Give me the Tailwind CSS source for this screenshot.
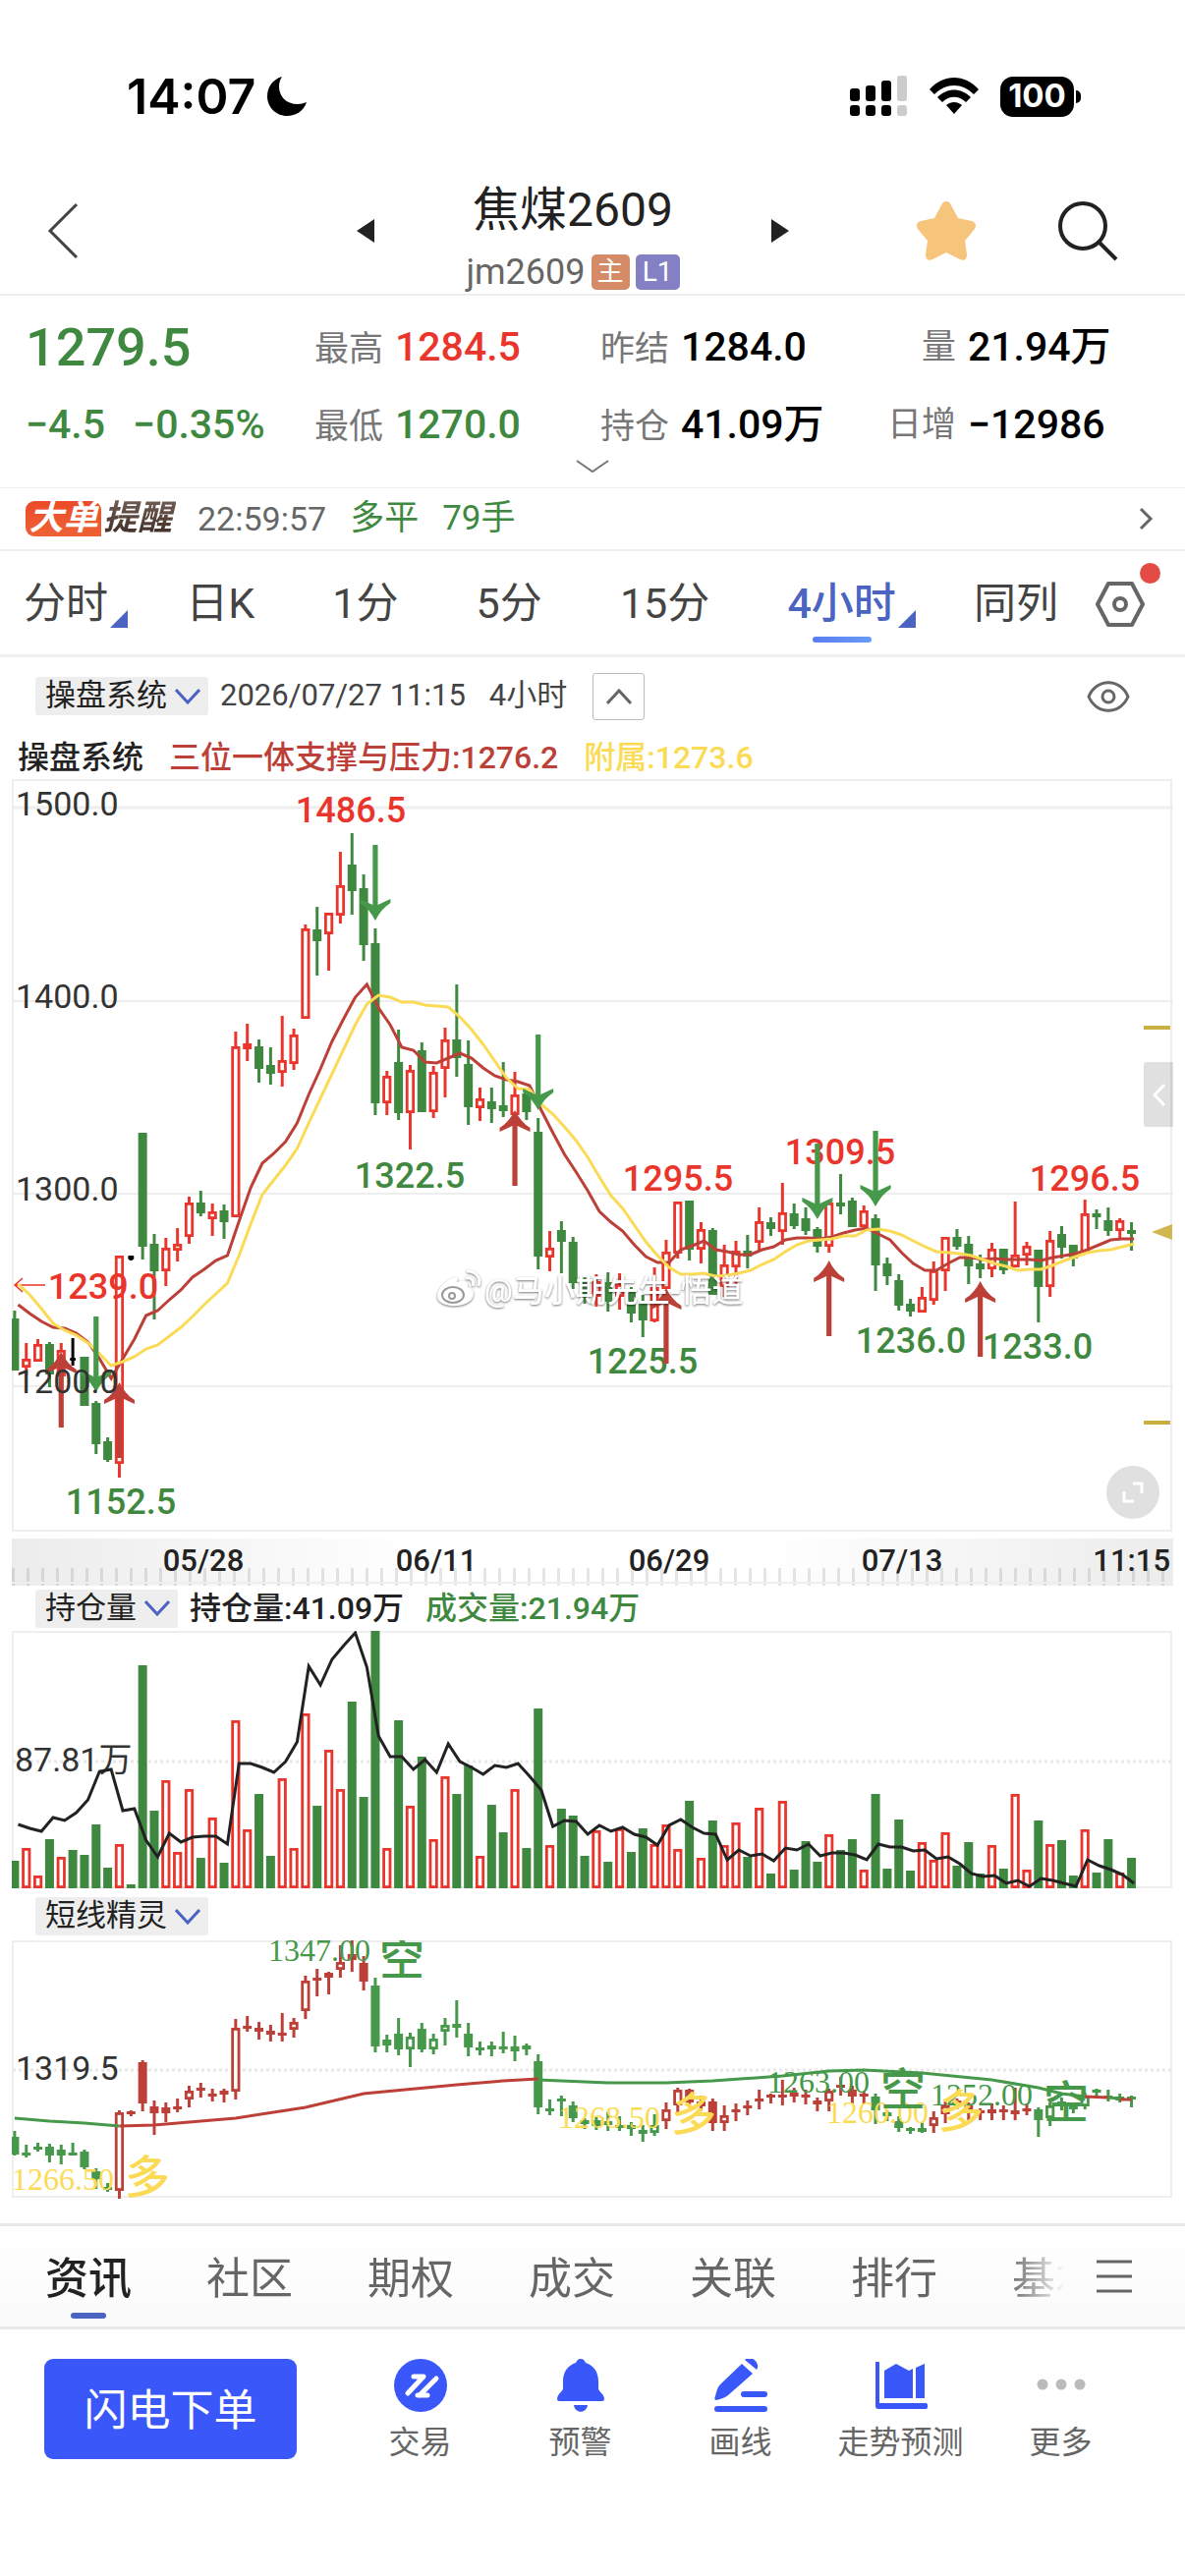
<!DOCTYPE html>
<html lang="zh-CN">
<head>
  <meta charset="UTF-8" />
  <meta name="viewport" content="width=device-width, initial-scale=1.0" />
  <title>焦煤2609</title>
  <script src="https://cdn.jsdelivr.net/npm/@tailwindcss/browser@4"></script>
</head>
<body class="bg-white font-[Roboto,'Noto_Sans_CJK_SC',sans-serif] text-[#222]">
  <div class="flex min-h-screen flex-col">

    <!-- Status bar -->
    <div class="flex h-[196px] shrink-0 items-center justify-between pl-[129px] pr-[106px]">
      <div class="flex items-center gap-3 font-[Inter,sans-serif] text-[50px] font-semibold text-black">
        <span>14:07</span>
        <svg class="h-[42px] w-[42px]" viewBox="0 0 42 42"><path d="M15 1C5 4 0 12 0 21c0 11 9 20 20 20 9 0 17-5 20-14-3 1-6 2-9 2C19 29 12 21 12 11c0-4 1-7 3-10z" /></svg>
      </div>
      <div class="flex items-center gap-[22px]">
        <svg class="h-[42px] w-[60px]" viewBox="0 0 60 42">
          <rect x="1" y="13" width="10" height="13" rx="3" /><rect x="17" y="10" width="10" height="16" rx="3" /><rect x="33" y="5" width="10" height="21" rx="3" /><rect x="49" y="0" width="10" height="26" rx="3" fill="#ccc" />
          <rect x="1" y="30" width="10" height="11" rx="3" /><rect x="17" y="30" width="10" height="11" rx="3" /><rect x="33" y="30" width="10" height="11" rx="3" /><rect x="49" y="30" width="10" height="11" rx="3" fill="#ccc" />
        </svg>
        <svg class="h-[38px] w-[50px]" viewBox="0 0 50 38">
          <path d="M0 12C14-4 36-4 50 12l-5 5C33 5 17 5 5 17z" /><path d="M8 20c10-10 24-10 34 0l-5 5c-7-7-17-7-24 0z" /><path d="M17 28c5-4 11-4 16 0l-8 9z" />
        </svg>
        <div class="flex items-center gap-[2px]">
          <span class="flex h-[41px] w-[75px] items-center justify-center rounded-[13px] bg-black font-[Inter,sans-serif] text-[33px] font-bold text-white">100</span>
          <span class="h-[13px] w-[5px] rounded-r-full bg-black"></span>
        </div>
      </div>
    </div>

    <!-- Title bar -->
    <header class="flex h-[105px] shrink-0 items-start justify-between border-b-2 border-[#eee] pl-[48px] pr-[68px]">
      <button aria-label="返回" class="mt-[10px]"><svg class="h-[58px] w-[32px]" viewBox="0 0 32 58" fill="none" stroke="#444" stroke-width="3"><path d="M30 2 3 29l27 27" /></svg></button>
      <div class="ml-[154px] flex items-start">
        <button aria-label="上一个" class="mt-[27px]"><svg class="h-[24px] w-[18px]" viewBox="0 0 18 24"><path d="M18 0v24L0 12z" fill="#222" /></svg></button>
        <div class="-mt-[16px] w-[404px] text-center">
          <h1 class="text-[48px] leading-[68px]">焦煤2609</h1>
          <div class="flex items-center justify-center gap-[6px] text-[#666]">
            <span class="text-[36px] leading-[58px]">jm2609</span>
            <span class="flex h-[36px] w-[39px] items-center justify-center rounded-[5px] bg-[#d48b66] text-[27px] text-white">主</span>
            <span class="flex h-[36px] w-[45px] items-center justify-center rounded-[5px] bg-[#8381c3] text-[28px] text-white">L1</span>
          </div>
        </div>
        <button aria-label="下一个" class="mt-[27px]"><svg class="h-[24px] w-[18px]" viewBox="0 0 18 24"><path d="M0 0v24l18-12z" fill="#222" /></svg></button>
      </div>
      <div class="mt-[8px] flex gap-[82px]">
        <button aria-label="自选"><svg class="h-[62px] w-[62px]" viewBox="0 0 62 62"><path d="M31 1c3 0 4 2 5 4l7 13 14 3c4 1 5 5 3 8L50 41l2 14c0 5-3 7-7 5l-14-7-14 7c-4 2-7 0-7-5l2-14L2 29c-2-3-1-7 3-8l14-3 7-13c1-2 2-4 5-4z" fill="#f6c47a" /></svg></button>
        <button aria-label="搜索"><svg class="h-[62px] w-[62px]" viewBox="0 0 62 62" fill="none" stroke="#222" stroke-width="4"><circle cx="26" cy="26" r="23" /><path d="m42 42 18 18" /></svg></button>
      </div>
    </header>

    <!-- Quote -->
    <section class="relative grid h-[195px] shrink-0 grid-cols-[294px_291px_1fr_auto] content-start pl-[26px] pr-[76px] pt-[14px] text-[41px] leading-[77px] font-medium whitespace-nowrap text-black">
      <div class="text-[54px] text-[#3f8840]">1279.5</div>
      <div><span class="mr-3 text-[35px] font-normal text-[#777]">最高</span><span class="text-[#ea352c]">1284.5</span></div>
      <div><span class="mr-3 text-[35px] font-normal text-[#777]">昨结</span>1284.0</div>
      <div class="grid grid-cols-[auto_145px] justify-end gap-3"><span class="text-[35px] font-normal text-[#777]">量</span><span>21.94万</span></div>
      <div class="flex gap-[28px] text-[#3f8840]"><span>−4.5</span><span>−0.35%</span></div>
      <div><span class="mr-3 text-[35px] font-normal text-[#777]">最低</span><span class="text-[#3f8840]">1270.0</span></div>
      <div><span class="mr-3 text-[35px] font-normal text-[#777]">持仓</span>41.09万</div>
      <div class="grid grid-cols-[auto_145px] justify-end gap-3"><span class="text-[35px] font-normal text-[#777]">日增</span><span>−12986</span></div>
      <button aria-label="展开行情" class="absolute bottom-[14px] left-1/2 -translate-x-1/2"><svg class="h-[14px] w-[34px]" viewBox="0 0 34 14" fill="none" stroke="#777" stroke-width="2"><path d="m1 1 16 11L33 1" /></svg></button>
    </section>

    <!-- Big order notice -->
    <a href="#" class="flex h-[65px] shrink-0 items-center border-b-2 border-t border-[#eee] pl-[26px] pr-[32px] text-[34px]">
      <span class="flex h-[36px] w-[77px] items-center justify-center rounded-l-[9px] rounded-tr-[9px] bg-linear-to-b from-[#ec4a28] to-[#ee6234] text-[35px] font-bold text-white italic">大单</span>
      <span class="ml-[2px] bg-linear-to-b from-[#7a665c] to-[#35241c] bg-clip-text pr-1 text-[35px] font-bold text-transparent italic">提醒</span>
      <span class="ml-[22px] text-[#666]">22:59:57</span>
      <span class="ml-[24px] text-[35px] text-[#3f8840]">多平</span>
      <span class="ml-[24px] text-[35px] text-[#3f8840]">79手</span>
      <svg class="ml-auto h-[24px] w-[15px]" viewBox="0 0 15 24" fill="none" stroke="#666" stroke-width="3"><path d="m2 2 10 10L2 22" /></svg>
    </a>

    <!-- Period tabs -->
    <nav class="flex h-[108px] shrink-0 items-center border-b-[3px] border-[#eee] pt-[2px] pl-[24px] pr-[41px] text-[43px] text-[#444]">
      <div class="flex flex-1 items-center justify-between">
        <button class="relative">分时<svg class="absolute bottom-[8px] left-full ml-[2px] h-[18px] w-[18px]" viewBox="0 0 18 18"><path d="M18 0v18H0z" fill="#4b63c1" /></svg></button>
        <button>日K</button>
        <button>1分</button>
        <button>5分</button>
        <button>15分</button>
        <button class="relative font-medium text-[#4b63c1]">4小时<svg class="absolute bottom-[8px] left-full ml-[2px] h-[18px] w-[18px]" viewBox="0 0 18 18"><path d="M18 0v18H0z" fill="#4b63c1" /></svg>
          <span class="absolute -bottom-[7px] left-1/2 h-[6px] w-[60px] -translate-x-1/2 rounded-full bg-linear-to-r from-[#5b7cf0] to-[#669bf8]"></span></button>
        <button>同列</button>
      </div>
      <button aria-label="设置" class="relative ml-[38px]">
        <svg class="h-[48px] w-[50px]" viewBox="0 0 50 48" fill="none" stroke="#666" stroke-width="4"><path d="M13 3h24l11 21-11 21H13L2 24z" stroke-linejoin="round" /><circle cx="25" cy="24" r="6" /></svg>
        <span class="absolute -top-[18px] -right-[16px] h-[21px] w-[21px] rounded-full bg-[#e54b45]"></span>
      </button>
    </nav>

    <!-- Main chart header -->
    <div class="flex h-[79px] shrink-0 items-center pl-[36px] pr-[56px] text-[31px] text-[#444]">
      <label class="relative flex items-center rounded-[3px] bg-[#eee]">
        <select aria-label="主图指标" class="h-[39px] appearance-none bg-transparent pr-[42px] pb-[2px] pl-[10px] text-[31px] leading-[37px] text-[#222]"><option>操盘系统</option></select>
        <svg class="pointer-events-none absolute right-[8px] h-[16px] w-[26px]" viewBox="0 0 26 16" fill="none" stroke="#4b63c1" stroke-width="3"><path d="m1 1 12 13L25 1" /></svg>
      </label>
      <span class="ml-[12px]">2026/07/27 11:15</span>
      <span class="ml-[24px]">4小时</span>
      <button aria-label="收起" class="ml-[26px] flex h-[48px] w-[53px] items-center justify-center rounded-[3px] border border-[#bbb]"><svg class="h-[16px] w-[26px]" viewBox="0 0 26 16" fill="none" stroke="#666" stroke-width="3"><path d="M1 15 13 2l12 13" /></svg></button>
      <button aria-label="显示" class="ml-auto"><svg class="h-[32px] w-[44px]" viewBox="0 0 44 32" fill="none" stroke="#666" stroke-width="3"><path d="M2 16C10-3 34-3 42 16 34 35 10 35 2 16z" /><circle cx="22" cy="16" r="6" /></svg></button>
    </div>
    <div class="flex h-[45px] shrink-0 items-center gap-[26px] pl-[18px] text-[32px] font-medium">
      <span>操盘系统</span><span class="text-[#bd4038]">三位一体支撑与压力:1276.2</span><span class="text-[#fbdb55]">附属:1273.6</span>
    </div>

    <!-- Main chart -->
    <div class="relative px-[12px]">
      <svg class="block w-full" viewBox="12 793 1182 773">
        <g fill="none" stroke="#eee" stroke-width="2">
          <rect x="13" y="794" width="1179" height="764" />
          <path d="M12 822h1182" stroke-width="3" /><path d="M12 1019h1182M12 1215h1182M12 1411h1182" />
        </g>
        <g id="candles"></g>
        <g class="text-[36px] font-medium" text-anchor="middle" fill="#ea352c">
          <text x="357" y="837">1486.5</text><text x="690" y="1212">1295.5</text><text x="855" y="1185">1309.5</text><text x="1104" y="1212">1296.5</text><text x="105" y="1322">1239.0</text>
        </g>
        <g class="text-[36px] font-medium" text-anchor="middle" fill="#3f8840">
          <text x="417" y="1209">1322.5</text><text x="123" y="1541">1152.5</text><text x="654" y="1398">1225.5</text><text x="927" y="1377">1236.0</text><text x="1056" y="1383">1233.0</text>
        </g>
        <path d="M46 1308H15m8-7-8 7 8 7" fill="none" stroke="#ea352c" stroke-width="1.5" />
        <g id="lines"></g>
        <g id="arrows"></g>
        <g class="text-[34px]" fill="#333">
          <text x="16" y="830">1500.0</text><text x="16" y="1026">1400.0</text><text x="16" y="1222">1300.0</text><text x="16" y="1418">1200.0</text>
        </g>
        <g fill="#c9b042"><rect x="1164" y="1044" width="27" height="4" /><rect x="1164" y="1446" width="27" height="4" /><path d="m1172 1254 21-8v16z" fill="#d0b750" /></g>
        <!-- watermark -->
        <g class="drop-shadow-[0_1px_1px_#0008]">
          <path d="M462 1300c-9 3-17 12-17 19 0 14 36 14 37-2 0-4-3-6-6-7 2-5-4-8-11-5 2-5 0-6-3-5z" fill="#fff" />
          <ellipse cx="461" cy="1318" rx="11" ry="8" fill="none" stroke="#999" stroke-width="2" /><circle cx="460" cy="1319" r="3" fill="none" stroke="#999" stroke-width="2" />
          <path d="M474 1301c6-1 9 3 7 8M475 1294c9-1 15 7 12 15" fill="none" stroke="#fff" stroke-width="3" />
          <text x="493" y="1325" class="text-[32px] font-medium" fill="#fff">@马小期先生-悟道</text>
        </g>
      </svg>
      <button aria-label="打开侧栏" class="absolute top-[288px] right-[12px] flex h-[66px] w-[30px] items-center justify-center rounded-l-[3px] bg-black/12"><svg class="h-[23px] w-[13px]" viewBox="0 0 13 23" fill="none" stroke="#fff" stroke-width="3"><path d="M12 1 2 11.500l10 10.500" /></svg></button>
      <button aria-label="全屏" class="absolute right-[26px] bottom-[20px] flex h-[54px] w-[54px] items-center justify-center rounded-full bg-[#e0e0e0]"><svg class="h-[24px] w-[24px]" viewBox="0 0 24 24" fill="none" stroke="#fff" stroke-width="3"><path d="M12 3h9v10M3 11v10h10" /></svg></button>
    </div>

    <!-- Time axis -->
    <div class="px-[12px]">
      <svg class="block w-full" viewBox="12 1566 1182 48">
        <defs>
          <linearGradient id="axisBg"><stop offset="0" stop-color="#ececec" /><stop offset=".35" stop-color="#fff" /><stop offset=".65" stop-color="#fff" /><stop offset="1" stop-color="#ececec" /></linearGradient>
          <pattern id="ticks" x="12" y="1596" width="15" height="18" patternUnits="userSpaceOnUse"><rect width="3" height="18" fill="#000" fill-opacity=".1" /></pattern>
        </defs>
        <rect x="12" y="1566" width="1182" height="48" fill="url(#axisBg)" />
        <rect x="12" y="1596" width="1182" height="18" fill="url(#ticks)" />
        <path d="M12 1611h1182" stroke="#eee" stroke-width="2" />
        <g class="text-[31px] font-medium" fill="#222" text-anchor="middle">
          <text x="207" y="1599">05/28</text><text x="444" y="1599">06/11</text><text x="681" y="1599">06/29</text><text x="918" y="1599">07/13</text><text x="1191" y="1599" text-anchor="end">11:15</text>
        </g>
      </svg>
    </div>

    <!-- Open interest / volume -->
    <div class="flex h-[46px] shrink-0 items-center pl-[36px] text-[32px] font-medium">
      <label class="relative flex items-center rounded-[3px] bg-[#eee]">
        <select aria-label="副图指标一" class="h-[39px] appearance-none bg-transparent pr-[42px] pb-[2px] pl-[10px] text-[31px] leading-[37px] font-normal text-[#222]"><option>持仓量</option></select>
        <svg class="pointer-events-none absolute right-[8px] h-[16px] w-[26px]" viewBox="0 0 26 16" fill="none" stroke="#4b63c1" stroke-width="3"><path d="m1 1 12 13L25 1" /></svg>
      </label>
      <span class="ml-[12px]">持仓量:41.09万</span><span class="ml-[22px] text-[#3f8840]">成交量:21.94万</span>
    </div>
    <div class="px-[12px]">
      <svg class="block w-full" viewBox="12 1660 1182 264">
        <rect x="13" y="1661" width="1179" height="260" fill="none" stroke="#eee" stroke-width="2" />
        <path d="M13 1793h1179" stroke="#e8e8e8" stroke-width="3" stroke-dasharray="3" />
        <text x="15" y="1803" class="text-[34px]" fill="#333">87.81万</text>
        <g id="volume"></g>
      </svg>
    </div>

    <!-- Short-term signals -->
    <div class="flex h-[51px] shrink-0 items-center pt-[2px] pl-[36px]">
      <label class="relative flex items-center rounded-[3px] bg-[#eee]">
        <select aria-label="副图指标二" class="h-[39px] appearance-none bg-transparent pr-[42px] pb-[2px] pl-[10px] text-[31px] leading-[37px] text-[#222]"><option>短线精灵</option></select>
        <svg class="pointer-events-none absolute right-[8px] h-[16px] w-[26px]" viewBox="0 0 26 16" fill="none" stroke="#4b63c1" stroke-width="3"><path d="m1 1 12 13L25 1" /></svg>
      </label>
    </div>
    <div class="px-[12px]">
      <svg class="block w-full" viewBox="12 1975 1182 288">
        <rect x="13" y="1976" width="1179" height="260" fill="none" stroke="#eee" stroke-width="2" />
        <path d="M13 2107h1179" stroke="#e8e8e8" stroke-width="3" stroke-dasharray="3" />
        <text x="16" y="2117" class="text-[34px]" fill="#333">1319.5</text>
        <g id="signals"></g>
        <g class="font-['Liberation_Serif',serif] text-[32px]">
          <g fill="#46984a"><text x="273" y="1996">1347.00</text><text x="781" y="2130">1263.00</text><text x="947" y="2143">1252.00</text></g>
          <g fill="#fbdb55"><text x="12" y="2229">1266.50</text><text x="568" y="2166">1268.50</text><text x="841" y="2161">1260.00</text></g>
        </g>
        <g class="text-[46px] font-medium">
          <g fill="#46984a"><text x="386" y="2010">空</text><text x="896" y="2143">空</text><text x="1062" y="2156">空</text></g>
          <g fill="#fbdb55"><text x="127" y="2232">多</text><text x="683" y="2168">多</text><text x="955" y="2165">多</text></g>
        </g>
      </svg>
    </div>

    <!-- Info tabs -->
    <nav class="flex h-[108px] shrink-0 items-center justify-between border-t-[3px] border-b-[3px] border-[#e9e9e9] bg-linear-to-b from-white to-[#fafafa] pr-[54px] pl-[46px] text-[44px] text-[#666]">
      <div class="flex w-[1040px] gap-[76px] overflow-hidden mask-r-from-[980px] mask-r-to-[1038px] pt-[5px] leading-[84px] whitespace-nowrap">
        <button class="relative font-medium text-[#222]">资讯<span class="absolute bottom-[2px] left-1/2 h-[6px] w-[36px] -translate-x-1/2 rounded-full bg-[#4b63c1]"></span></button>
        <button>社区</button>
        <button>期权</button>
        <button>成交</button>
        <button>关联</button>
        <button>排行</button>
        <button>基本</button>
      </div>
      <button aria-label="全部栏目"><svg class="h-[34px] w-[36px]" viewBox="0 0 36 34" stroke="#666" stroke-width="3"><path d="M0 2h36M0 17h36M0 32h36" /></svg></button>
    </nav>

    <!-- Bottom bar -->
    <footer class="flex items-start pt-[30px] pr-[45px] pl-[45px] text-[32px] text-[#666]">
      <button class="h-[102px] w-[257px] rounded-[9px] bg-[#3a57fa] pt-[3px] text-[44px] text-white">闪电下单</button>
      <div class="ml-[44px] grid flex-1 grid-cols-5 text-center leading-[46px] whitespace-nowrap">
        <button class="flex flex-col items-center gap-[8px]">
          <svg class="h-[54px] w-[54px]" viewBox="0 0 54 54"><circle cx="27" cy="27" r="27" fill="#3a57fa" /><path d="M20 18h10L14 35M24 37h10M43 20 26 37" fill="none" stroke="#fff" stroke-width="5" stroke-linecap="round" stroke-linejoin="round" /></svg>交易
        </button>
        <button class="flex flex-col items-center gap-[8px]">
          <svg class="h-[54px] w-[54px]" viewBox="0 0 54 54" fill="#3a57fa"><path d="M27 0c3 0 4 2 5 4 9 3 13 10 13 19v7c0 3 6 6 6 11 0 1-1 2-2 2H5c-1 0-2-1-2-2 0-5 6-8 6-11v-7C9 14 13 7 22 4c1-2 2-4 5-4zM20 47h14c-1 9-13 9-14 0z" /></svg>预警
        </button>
        <button class="flex flex-col items-center gap-[8px]">
          <svg class="h-[54px] w-[54px]" viewBox="0 0 54 54" fill="#3a57fa"><path d="m31 1 12 10c3-4 0-9-4-11-3-1-6-1-8 1zM28 5l11 10-25 22c-4 3-8 4-12 5-2 0-2-2-1-4 1-4 2-9 5-12z" /><rect x="27" y="33" width="27" height="6" rx="3" /><rect x="0" y="48" width="54" height="6" rx="3" /></svg>画线
        </button>
        <button class="flex flex-col items-center gap-[8px]">
          <svg class="h-[54px] w-[54px]" viewBox="0 0 54 54" fill="#3a57fa"><path d="M1 3h4v42h47c3 0 3 6 0 6H4c-2 0-3-1-3-3zM10 12 22 5l13 7 4-2v30H10zM42 9l9-4v35h-9z" /></svg>走势预测
        </button>
        <button class="flex flex-col items-center gap-[8px]">
          <svg class="h-[54px] w-[54px]" viewBox="0 0 54 54" fill="#bbb"><circle cx="8" cy="26" r="5.500" /><circle cx="27" cy="26" r="5.500" /><circle cx="46" cy="26" r="5.500" /></svg>更多
        </button>
      </div>
    </footer>
  </div>

  <script>
    // kind, high, body top, body bottom, low
    const candles = `g 1334 1342 1395 1395,r 1367 1383 1392 1400,r 1363 1368 1386 1386,g 1366 1368 1399 1412,r 1367 1374 1401 1401,k 1362 1382 1385 1390,g 1381 1381 1431 1431,g 1426 1428 1470 1480,g 1463 1467 1486 1488,r 1278 1278 1490 1504,
k 1278 1278 1282 1283,g 1153 1153 1269 1282,g 1256 1266 1294 1343,r 1260 1270 1294 1309,r 1250 1266 1273 1284,r 1218 1224 1259 1266,g 1212 1224 1235 1238,r 1225 1233 1241 1258,g 1226 1232 1244 1261,r 1050 1065 1239 1239,
r 1042 1062 1068 1080,g 1058 1065 1088 1102,g 1066 1084 1093 1104,r 1034 1079 1092 1106,r 1047 1053 1083 1089,r 941 945 1037 1037,g 923 946 958 993,r 929 929 951 988,r 867 901 932 940,g 848 880 907 931,
g 890 904 962 978,g 945 960 1123 1135,r 1090 1095 1123 1135,g 1048 1081 1133 1140,r 1084 1089 1133 1170,g 1061 1069 1132 1132,r 1085 1091 1132 1138,r 1046 1058 1088 1117,g 1002 1058 1077 1096,g 1059 1083 1127 1145,
r 1107 1118 1128 1141,g 1107 1121 1129 1143,g 1081 1125 1131 1137,r 1091 1114 1135 1135,g 1113 1113 1132 1140,g 1138 1152 1279 1292,r 1253 1270 1280 1294,g 1243 1252 1264 1296,g 1259 1264 1306 1312,g 1300 1303 1318 1327,
r 1297 1304 1320 1330,g 1295 1305 1325 1335,r 1296 1307 1320 1333,g 1310 1315 1337 1346,g 1318 1327 1344 1361,r 1290 1310 1345 1346,r 1262 1274 1312 1312,r 1223 1223 1276 1281,g 1222 1222 1272 1283,r 1244 1251 1272 1286,
g 1250 1252 1318 1318,r 1267 1287 1310 1320,r 1263 1273 1290 1307,g 1257 1273 1279 1291,r 1229 1243 1265 1273,g 1239 1244 1251 1258,r 1204 1234 1254 1267,g 1225 1235 1248 1251,g 1229 1240 1253 1257,g 1249 1251 1269 1275,
r 1224 1224 1269 1275,g 1195 1224 1228 1236,g 1219 1222 1249 1249,r 1227 1232 1249 1251,g 1236 1240 1288 1314,g 1280 1286 1299 1308,g 1297 1303 1329 1334,g 1322 1327 1335 1340,r 1310 1320 1336 1336,r 1284 1293 1324 1328,
r 1259 1259 1294 1314,g 1251 1259 1269 1272,g 1258 1266 1289 1307,g 1277 1286 1292 1301,r 1265 1271 1292 1300,g 1271 1271 1293 1297,r 1223 1277 1290 1290,r 1264 1268 1278 1288,g 1272 1272 1310 1346,r 1253 1262 1310 1320,
g 1248 1256 1270 1281,g 1267 1267 1281 1289,r 1221 1235 1275 1277,g 1231 1235 1239 1251,g 1229 1242 1253 1258,r 1240 1242 1253 1260,g 1244 1252 1256 1273`;

    const pressure = [1328,1337,1345,1351,1352,1357,1366,1383,1403,1383,1363,1339,1334,1323,1313,1300,1292,1283,1278,1243,1209,1184,1174,1162,1143,1114,1088,1060,1037,1015,1002,1026,1043,1066,1069,1081,1082,1077,1072,1077,1087,1095,1099,1101,1105,1130,1153,1175,1193,1212,1233,1244,1253,1267,1279,1285,1285,1272,1268,1263,1272,1274,1277,1277,1272,1269,1262,1260,1260,1261,1259,1255,1252,1250,1256,1262,1275,1286,1293,1293,1286,1280,1280,1282,1281,1282,1282,1282,1283,1280,1278,1276,1272,1267,1262,1261,1261];
    const attached = [1307,1318,1332,1347,1354,1359,1367,1378,1390,1386,1381,1373,1369,1360,1351,1340,1328,1317,1306,1278,1246,1216,1201,1186,1169,1143,1118,1093,1068,1043,1022,1013,1015,1020,1020,1023,1024,1025,1035,1048,1063,1080,1097,1108,1109,1124,1134,1147,1161,1178,1198,1217,1230,1247,1264,1278,1290,1297,1297,1296,1299,1298,1296,1293,1287,1282,1274,1267,1263,1262,1261,1258,1258,1252,1251,1253,1257,1263,1269,1274,1275,1276,1278,1282,1286,1289,1293,1292,1292,1288,1283,1279,1275,1273,1272,1269,1266];

    // bar tops, one per candle
    const volume = [1894,1881,1909,1872,1890,1883,1888,1857,1901,1877,1918,1695,1843,1812,1885,1821,1891,1850,1896,1751,1862,1826,1889,1810,1881,1744,1838,1781,1821,1732,1829,1660,1881,1751,1838,1788,1872,1808,1826,1797,1889,1837,1865,1821,1881,1739,1878,1841,1848,1889,1863,1895,1861,1885,1861,1877,1857,1882,1833,1891,1853,1878,1855,1890,1840,1907,1833,1903,1874,1895,1867,1883,1872,1903,1826,1902,1852,1904,1875,1893,1865,1899,1875,1907,1878,1902,1826,1903,1853,1877,1873,1909,1862,1906,1872,1906,1891];
    const interest = [1857,1861,1864,1850,1853,1845,1832,1803,1801,1843,1841,1873,1890,1866,1875,1870,1869,1869,1877,1795,1795,1799,1804,1793,1773,1696,1715,1689,1675,1662,1697,1767,1788,1788,1801,1791,1804,1775,1793,1799,1806,1797,1799,1795,1808,1822,1859,1853,1854,1867,1858,1864,1860,1867,1870,1878,1858,1852,1860,1866,1867,1893,1883,1889,1887,1894,1881,1883,1877,1889,1886,1886,1888,1893,1877,1880,1880,1884,1883,1892,1890,1897,1907,1910,1909,1917,1914,1920,1912,1914,1917,1920,1893,1899,1903,1908,1917];

    // capital letter = hollow body
    const signals = `g 2169 2175 2193 2194,g 2183 2191 2194 2196,g 2181 2185 2188 2190,g 2182 2185 2194 2201,G 2183 2188 2194 2203,g 2181 2191 2193 2193,g 2188 2190 2206 2208,g 2207 2210 2218 2228,g 2222 2226 2228 2231,R 2148 2150 2230 2238,
r 2148 2149 2152 2154,r 2097 2099 2141 2149,r 2138 2144 2151 2173,r 2140 2145 2151 2160,r 2136 2144 2147 2150,R 2123 2128 2137 2145,r 2120 2125 2127 2135,r 2126 2131 2134 2139,r 2126 2128 2132 2140,R 2055 2064 2129 2137,
r 2052 2062 2065 2068,r 2058 2064 2068 2076,r 2061 2067 2071 2078,r 2049 2069 2072 2078,R 2054 2058 2066 2074,R 2011 2016 2047 2055,r 2004 2013 2016 2032,r 2007 2008 2013 2030,R 1980 1997 2005 2013,r 1975 1989 1995 2007,
r 1991 1998 2017 2026,g 2013 2021 2083 2089,G 2071 2076 2082 2089,g 2054 2070 2086 2092,G 2069 2073 2086 2104,g 2059 2065 2086 2089,G 2070 2075 2086 2091,G 2054 2061 2068 2082,g 2036 2060 2064 2074,g 2059 2070 2084 2093,
g 2078 2084 2087 2092,g 2078 2082 2086 2093,g 2068 2083 2085 2090,g 2072 2083 2088 2098,g 2080 2082 2086 2092,g 2091 2098 2145 2152,g 2137 2146 2149 2153,g 2133 2136 2139 2154,g 2139 2143 2156 2160,g 2156 2158 2162 2167,
g 2155 2158 2164 2168,g 2150 2159 2163 2169,g 2154 2163 2166 2169,g 2160 2163 2167 2174,g 2163 2168 2172 2180,G 2152 2163 2171 2174,R 2140 2147 2159 2167,R 2125 2127 2143 2151,r 2126 2127 2140 2145,r 2133 2139 2144 2149,
r 2136 2139 2161 2169,R 2143 2153 2161 2169,r 2141 2147 2150 2159,r 2138 2143 2146 2153,r 2127 2136 2139 2147,r 2131 2132 2134 2141,r 2117 2132 2135 2143,r 2125 2130 2134 2140,r 2127 2132 2135 2142,r 2135 2138 2142 2149,
R 2126 2128 2139 2149,r 2114 2122 2125 2133,r 2123 2127 2134 2141,r 2129 2131 2134 2141,g 2131 2134 2148 2162,g 2148 2150 2154 2159,g 2154 2159 2166 2170,g 2165 2166 2168 2172,g 2160 2166 2170 2171,R 2149 2155 2164 2171,
R 2139 2143 2152 2161,r 2136 2138 2142 2147,r 2140 2143 2150 2158,r 2146 2148 2151 2158,r 2141 2147 2151 2158,r 2143 2147 2150 2158,r 2125 2148 2152 2158,r 2141 2146 2149 2153,g 2145 2147 2158 2175,G 2140 2143 2156 2164,
g 2135 2139 2143 2148,g 2140 2143 2147 2151,G 2130 2133 2144 2147,g 2126 2127 2130 2134,g 2127 2133 2136 2139,g 2131 2134 2138 2140,g 2133 2134 2137 2145`;

    const RED = '#ea352c', GREEN = '#3f8840', SIG_RED = '#bd4038', SIG_GREEN = '#46984a';
    const cx = i => 14.9 + 11.84 * i;
    const rows = s => s.split(',').map(r => r.trim().split(' ')).map(r => [r[0], ...r.slice(1).map(Number)]);

    function body(x, top, bottom, color, hollow) {
      if (hollow && bottom - top > 6) return `<rect x="${x - 3.2}" y="${top + 1.4}" width="6.4" height="${bottom - top - 2.8}" fill="#fff" stroke="${color}" stroke-width="2.8"/>`;
      return `<rect x="${x - 4.5}" y="${top}" width="9" height="${Math.max(bottom - top, 3)}" fill="${color}"/>`;
    }
    function wick(x, high, low, color) {
      return `<path d="M${x} ${high}V${low}" stroke="${color}" stroke-width="3"/>`;
    }
    function line(ys, color) {
      return `<polyline fill="none" stroke="${color}" stroke-width="3" points="${ys.map((y, i) => `${18.5 + 11.83 * i},${y}`).join(' ')}"/>`;
    }

    // Main chart
    const data = rows(candles);
    document.getElementById('candles').innerHTML = data.map(([k, h, t, b, l], i) => {
      const color = { r: RED, g: GREEN, k: '#000' }[k];
      const x = cx(i);
      if (k === 'k') return wick(x, h, l, color) + `<rect x="${x - 3}" y="${t}" width="6" height="${b - t}" rx="1"/>`;
      return wick(x, h, l, color) + body(x, t, b, color, k === 'r');
    }).join('');
    document.getElementById('lines').innerHTML = line(pressure, SIG_RED) + line(attached, '#fbdb55');

    // Buy / sell arrows: candle index and y of the tip
    const down = [[7, 1417], [31, 937], [45, 1130], [69, 1241], [74, 1228]];
    const up = [[4, 1376], [9, 1407], [43, 1130], [56, 1311], [70, 1283], [83, 1304]];
    const arrow = (i, y, s, color) => {
      const x = cx(i);
      return `<path fill="${color}" d="M${x} ${y}C${x + 4} ${y + 8 * s} ${x + 9} ${y + 14 * s} ${x + 15.5} ${y + 18 * s}V${y + 22 * s}C${x + 11} ${y + 20 * s} ${x + 7} ${y + 18 * s} ${x + 2.6} ${y + 16 * s}V${y + 77 * s}H${x - 2.6}V${y + 16 * s}C${x - 7} ${y + 18 * s} ${x - 11} ${y + 20 * s} ${x - 15.5} ${y + 22 * s}V${y + 18 * s}C${x - 9} ${y + 14 * s} ${x - 4} ${y + 8 * s} ${x} ${y}z"/>`;
    };
    document.getElementById('arrows').innerHTML =
      down.map(([i, y]) => arrow(i, y, -1, SIG_GREEN)).join('') + up.map(([i, y]) => arrow(i, y, 1, SIG_RED)).join('');

    // Volume
    document.getElementById('volume').innerHTML = volume.map((top, i) => {
      const red = data[i][0] === 'r';
      return body(cx(i), top, 1922, red ? RED : GREEN, red);
    }).join('') + line(interest, '#222');

    // Signals
    const trend = [
      [SIG_GREEN, [[0, 2156], [3, 2159], [6, 2161], [9, 2164]]],
      [SIG_RED, [[9, 2164], [12, 2163], [15, 2160], [19, 2156], [25, 2145], [30, 2131], [38, 2122], [42, 2118], [45, 2116]]],
      [SIG_GREEN, [[45, 2117], [49, 2119], [51, 2120], [56, 2120], [60, 2118], [66, 2113], [70, 2108], [73, 2107], [78, 2110], [84, 2117], [88, 2125], [90, 2131], [92, 2134]]],
      [SIG_RED, [[92, 2134], [94, 2135]]],
      [SIG_GREEN, [[94, 2135], [95, 2136]]],
      [SIG_RED, [[95, 2137], [96, 2137]]],
    ];
    document.getElementById('signals').innerHTML = rows(signals).map(([k, h, t, b, l], i) => {
      const color = k.toLowerCase() === 'r' ? SIG_RED : SIG_GREEN;
      return wick(cx(i), h, l, color) + body(cx(i), t, b, color, k < 'a');
    }).join('') + trend.map(([color, pts]) =>
      `<polyline fill="none" stroke="${color}" stroke-width="3" points="${pts.map(([i, y]) => `${cx(i)},${y}`).join(' ')}"/>`).join('');
  </script>
</body>
</html>
